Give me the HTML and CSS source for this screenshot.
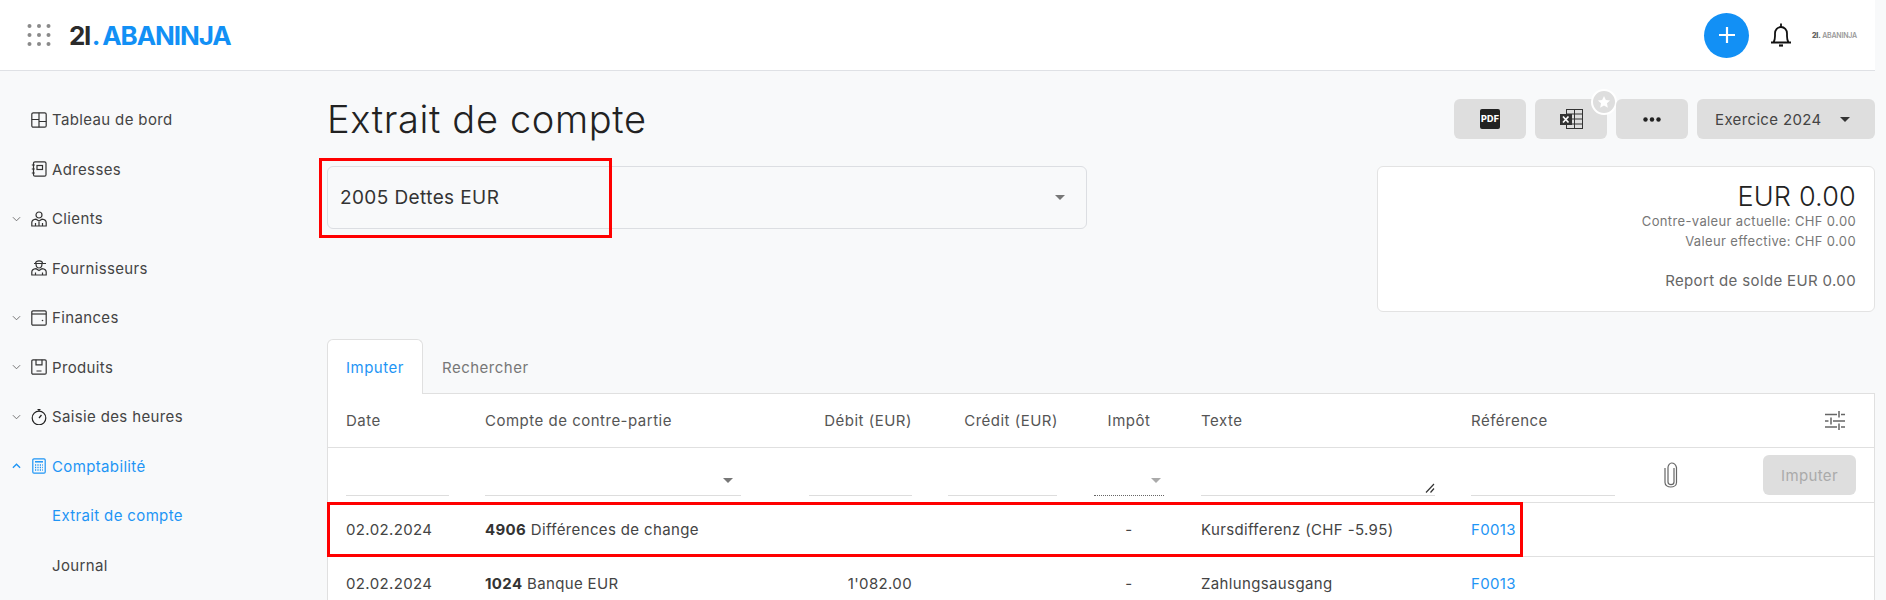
FILE: index.html
```html
<!DOCTYPE html>
<html lang="fr">
<head>
<meta charset="utf-8">
<title>Extrait de compte</title>
<link rel="stylesheet" href="styles.css">
</head>
<body>
<div class="app">
  <header class="topbar">
    <div class="brand">
      <svg class="grid-icon" width="24" height="22" viewBox="0 0 24 22"><g fill="#8a8a8a"><circle cx="2.500" cy="2" r="2"/><circle cx="12" cy="2" r="2"/><circle cx="21.500" cy="2" r="2"/><circle cx="2.500" cy="11" r="2"/><circle cx="12" cy="11" r="2"/><circle cx="21.500" cy="11" r="2"/><circle cx="2.500" cy="20" r="2"/><circle cx="12" cy="20" r="2"/><circle cx="21.500" cy="20" r="2"/></g></svg>
      <div class="logo"><span class="logo-dark">2I</span><span class="logo-dot">.</span><span class="logo-blue">ABANINJA</span></div>
    </div>
    <div class="top-actions">
      <button class="plus" type="button"><svg width="18" height="18" viewBox="0 0 18 18"><path d="M9 1v16M1 9h16" stroke="#fff" stroke-width="2.200"/></svg></button>
      <svg class="bell" width="24" height="26" viewBox="0 0 24 26" fill="none" stroke="#111" stroke-width="1.800"><path d="M2 20.500h20M4.500 20.500c1-1.500 1.500-3 1.500-6.500v-2.500c0-3.500 2.500-6.500 6-6.500s6 3 6 6.500V14c0 3.500.5 5 1.500 6.500"/><path d="M12 1.500v3.500" stroke-width="1.800"/><path d="M10 23.500h4" stroke-width="2.200"/></svg>
      <div class="mini-logo"><b>2I.</b> ABANINJA</div>
    </div>
  </header>

  <div class="layout">
    <nav class="sidebar">
      <a class="nav-item"><span class="chev"></span>
        <svg class="nav-icon" viewBox="0 0 16 16" fill="none" stroke="currentColor" stroke-width="1.200"><rect x=".8" y=".8" width="14.400" height="14.400" rx="1.500"/><path d="M8 .8v14.400M.8 7.500h7.200M8 9.500h7.200"/></svg>
        Tableau de bord</a>
      <a class="nav-item"><span class="chev"></span>
        <svg class="nav-icon" viewBox="0 0 16 16" fill="none" stroke="currentColor" stroke-width="1.200"><rect x="2.500" y=".8" width="12.500" height="14.400" rx="1.500"/><rect x="6" y="4.500" width="5.500" height="4"/><path d="M.8 4h3M.8 8h3M.8 12h3"/></svg>
        Adresses</a>
      <a class="nav-item"><span class="chev"><svg viewBox="0 0 10 6" fill="none" stroke="currentColor" stroke-width="1"><path d="M1 1l4 4 4-4"/></svg></span>
        <svg class="nav-icon" viewBox="0 0 16 16" fill="none" stroke="currentColor" stroke-width="1.200"><circle cx="8" cy="4" r="3"/><path d="M.8 15v-3.500c0-1.500 2-3 4.200-3.300L8 10l3-1.800c2.200.3 4.200 1.800 4.200 3.300V15zM4.500 12v3M8 11v4M11.500 12v3"/></svg>
        Clients</a>
      <a class="nav-item"><span class="chev"></span>
        <svg class="nav-icon" viewBox="0 0 16 16" fill="none" stroke="currentColor" stroke-width="1.200"><path d="M4.500 3.500c0-3.500 7-3.500 7 0zM3 3.500h12M5 3.500c0 6 6 6 6 0"/><path d="M.8 15v-3c0-1.500 2-3 4.200-3.300L8 10.500l3-1.800c2.200.3 4.200 1.800 4.200 3.300v3zM4.500 12.500V15M11.500 12.500V15"/></svg>
        Fournisseurs</a>
      <a class="nav-item"><span class="chev"><svg viewBox="0 0 10 6" fill="none" stroke="currentColor" stroke-width="1"><path d="M1 1l4 4 4-4"/></svg></span>
        <svg class="nav-icon" viewBox="0 0 16 16" fill="none" stroke="currentColor" stroke-width="1.200"><rect x=".8" y=".8" width="14.400" height="14.400" rx="1.200"/><path d="M.8 4h14.400"/><circle cx="11.500" cy="10.500" r=".8" fill="currentColor" stroke="none"/></svg>
        Finances</a>
      <a class="nav-item"><span class="chev"><svg viewBox="0 0 10 6" fill="none" stroke="currentColor" stroke-width="1"><path d="M1 1l4 4 4-4"/></svg></span>
        <svg class="nav-icon" viewBox="0 0 16 16" fill="none" stroke="currentColor" stroke-width="1.200"><rect x=".8" y=".8" width="14.400" height="14.400" rx="1.200"/><path d="M5 .8v5h6v-5M5.500 12h5"/></svg>
        Produits</a>
      <a class="nav-item"><span class="chev"><svg viewBox="0 0 10 6" fill="none" stroke="currentColor" stroke-width="1"><path d="M1 1l4 4 4-4"/></svg></span>
        <svg class="nav-icon" viewBox="0 0 16 16" fill="none" stroke="#222" stroke-width="1.200"><circle cx="8" cy="9" r="6.800"/><path d="M8 2.200V.2M6.500.4h3M8 9l2.500-3"/></svg>
        Saisie des heures</a>
      <a class="nav-item active"><span class="chev"><svg viewBox="0 0 10 6" fill="none" stroke="currentColor" stroke-width="1.500"><path d="M1 5l4-4 4 4"/></svg></span>
        <svg class="nav-icon" viewBox="0 0 16 16" fill="none" stroke="currentColor" stroke-width="1.200"><rect x="1.800" y=".8" width="12.400" height="14.400" rx="1.200"/><path d="M4 3.800h8" stroke-width="1.500"/><path d="M4 7h8M4 9.500h8M4 12h8" stroke-width="1.300" stroke-dasharray="1.200 1.200"/></svg>
        Comptabilité</a>
      <a class="nav-item sub active">Extrait de compte</a>
      <a class="nav-item sub">Journal</a>
    </nav>

    <main class="content">
      <div class="title-row">
        <h1 class="title">Extrait de compte</h1>
        <div class="tools">
          <button class="tool" type="button"><svg width="20" height="20" viewBox="0 0 20 20"><rect width="20" height="20" rx="2" fill="#222"/></svg><span class="pdf-label">PDF</span></button>
          <button class="tool has-star" type="button">
            <svg width="23" height="20" viewBox="0 0 23 20" fill="none" stroke="#333" stroke-width="1"><rect x="6.500" y=".5" width="16" height="19"/><path d="M6.500 5h16M6.500 10h16M6.500 15h16M14.500.5v19"/><rect x="0" y="5" width="12" height="11" fill="#333" stroke="none"/><path d="M3 7.500l5.500 6M8.500 7.500l-5.500 6" stroke="#fff" stroke-width="1.700"/></svg>
            <span class="star"><svg width="14" height="14" viewBox="0 0 24 24"><path d="M12 1.500l3.200 7 7.300.8-5.400 5 1.500 7.400L12 18l-6.600 3.700 1.500-7.400-5.400-5 7.300-.8z" fill="#fff"/></svg></span>
          </button>
          <button class="tool" type="button"><svg width="18" height="5" viewBox="0 0 18 5"><g fill="#222"><circle cx="2.500" cy="2.500" r="2.200"/><circle cx="9" cy="2.500" r="2.200"/><circle cx="15.500" cy="2.500" r="2.200"/></g></svg></button>
          <button class="tool year" type="button">Exercice 2024<i class="caret dark"></i></button>
        </div>
      </div>

      <div class="summary-row">
        <div class="select-box"><span>2005 Dettes EUR</span><i class="caret"></i></div>
        <section class="balance">
          <div class="big">EUR 0.00</div>
          <div class="small">Contre-valeur actuelle: CHF 0.00</div>
          <div class="small">Valeur effective: CHF 0.00</div>
          <div class="carry">Report de solde EUR 0.00</div>
        </section>
      </div>

      <div class="tabs">
        <div class="tab current">Imputer</div>
        <div class="tab">Rechercher</div>
      </div>
      <div class="panel">
        <div class="row head">
          <div>Date</div>
          <div>Compte de contre-partie</div>
          <div class="num">Débit (EUR)</div>
          <div class="num credit">Crédit (EUR)</div>
          <div class="center">Impôt</div>
          <div>Texte</div>
          <div>Référence</div>
          <div class="end">
            <svg width="20" height="19" viewBox="0 0 20 19" fill="none" stroke="#666" stroke-width="1.500"><path d="M0 3.500h12M16 3.500h4M14 0v6.500M0 10h3.500M8 10h12M6 6.500v7M0 16h12M16 16h4M14 12.500V19"/></svg>
          </div>
        </div>
        <div class="row entry">
          <div><span class="field w-date"></span></div>
          <div><span class="field w-account"><i class="caret"></i></span></div>
          <div><span class="field w-debit"></span></div>
          <div><span class="field w-credit"></span></div>
          <div><span class="field w-tax"><i class="caret small-caret"></i></span></div>
          <div><span class="field w-text"><svg class="grip" width="10" height="10" viewBox="0 0 10 10" fill="none" stroke="#333" stroke-width="1.200"><path d="M1 9.500L9 1M5.500 9.500L9 5.500"/></svg></span></div>
          <div><span class="field w-ref"></span></div>
          <div class="entry-end">
            <svg class="clip" width="14" height="26" viewBox="0 0 14 26" fill="none" stroke="#666" stroke-width="1.200"><path d="M10 6v14c0 3.500-6 3.500-6 0V5.500c0-2.500 2-4.500 3.500-4.500S11.500 1.500 12.500 5.500v15c0 6-11.500 6-11.500 0V6"/></svg>
            <button class="submit" type="button">Imputer</button>
          </div>
        </div>
        <div class="row item">
          <div>02.02.2024</div>
          <div><b>4906</b> Différences de change</div>
          <div class="num"></div>
          <div class="num credit"></div>
          <div class="center">-</div>
          <div>Kursdifferenz (CHF -5.95)</div>
          <div><a class="link">F0013</a></div>
          <div></div>
        </div>
        <div class="row item">
          <div>02.02.2024</div>
          <div><b>1024</b> Banque EUR</div>
          <div class="num">1'082.00</div>
          <div class="num credit"></div>
          <div class="center">-</div>
          <div>Zahlungsausgang</div>
          <div><a class="link">F0013</a></div>
          <div></div>
        </div>
      </div>
    </main>
  </div>
</div>
<div class="mark mark-select"></div>
<div class="mark mark-row"></div>
</body>
</html>
```
FILE: styles.css
```css
* { box-sizing: border-box; }
html, body { margin: 0; height: 600px; overflow: hidden; }
body {
  background: #f8f9fa;
  font-family: Inter, "Liberation Sans", sans-serif;
  font-size: 15px;
  letter-spacing: .36px;
  color: #444;
  position: relative;
}
button { font: inherit; letter-spacing: inherit; border: 0; cursor: pointer; }
.app { width: 1875px; }

.topbar {
  height: 71px;
  background: #fff;
  border-bottom: 1px solid #dfe1e5;
  display: flex;
  align-items: center;
  justify-content: space-between;
  padding-left: 27px;
}
.brand { display: flex; align-items: center; gap: 18px; }
.logo { font-size: 26px; font-weight: 700; letter-spacing: -1.100px; line-height: 1; margin-top: 1px; display: flex; }
.logo-dark { color: #2b2b2b; letter-spacing: -1.500px; }
.logo-dot { color: #1290f5; margin: 0 3px 0 2px; }
.logo-blue { color: #1290f5; }
.top-actions { display: flex; align-items: center; padding-right: 19px; }
.plus {
  width: 45px; height: 45px; border-radius: 50%;
  background: #1290f5;
  display: flex; align-items: center; justify-content: center;
  padding: 0;
}
.bell { margin-left: 20px; }
.mini-logo { margin-left: 19px; font-size: 7px; font-weight: 600; color: #999; letter-spacing: -.2px; width: 44px; white-space: nowrap; }
.mini-logo b { color: #666; }

.layout { display: flex; }
.sidebar { width: 327px; flex: none; padding-top: 24px; height: 529px; overflow: hidden; }
.nav-item {
  height: 49.500px;
  display: flex;
  align-items: center;
  padding-left: 12px;
  color: #444;
  line-height: 1;
}
.nav-item.active { color: #1e95f5; }
.nav-item.sub { padding-left: 52px; }
.chev { width: 9px; height: 6px; flex: none; margin-right: 10px; color: #666; display: block; }
.active .chev { color: #1e95f5; }
.chev svg { width: 9px; height: 6px; display: block; }
.nav-icon { width: 16px; height: 16px; margin-right: 5px; flex: none; color: #333; }
.active .nav-icon { color: #1e95f5; }

.content { flex: 1; min-width: 0; padding-top: 28px; }
.title-row { display: flex; justify-content: space-between; align-items: center; height: 40px; }
.title { margin: 0; font-size: 38px; font-weight: 300; color: #222; letter-spacing: .65px; line-height: 40px; }
.tools { display: flex; gap: 9px; }
.tool {
  width: 72px; height: 40px;
  background: #dedede;
  border-radius: 6px;
  display: flex; align-items: center; justify-content: center;
  position: relative;
  padding: 0;
  color: #444;
}
.pdf-label { position: absolute; left: 0; right: 0; top: 14px; font-size: 9px; font-weight: 800; color: #fff; line-height: 12px; text-align: center; letter-spacing: .2px; }
.star {
  position: absolute; right: -10px; top: -10px;
  width: 26px; height: 26px;
  background: #dedede;
  border: 2px solid #fff;
  border-radius: 50%;
  display: flex; align-items: center; justify-content: center;
}
.year { width: 178px; justify-content: flex-start; padding-left: 18px; gap: 18px; }
.caret { width: 0; height: 0; border-left: 5px solid transparent; border-right: 5px solid transparent; border-top: 5px solid #777; display: block; }
.caret.dark { border-top-color: #333; }

.summary-row { display: flex; justify-content: space-between; align-items: flex-start; margin-top: 27px; }
.select-box {
  width: 760px; height: 63px;
  border: 1px solid #dcdee2;
  border-radius: 6px;
  display: flex; align-items: center; justify-content: space-between;
  padding: 0 21px 0 12px;
  font-size: 19px;
  letter-spacing: .4px;
  color: #333;
}
.balance {
  width: 498px; height: 146px;
  background: #fff;
  border: 1px solid #e3e3e3;
  border-radius: 6px;
  padding: 15px 18px 0 0;
  text-align: right;
}
.big { font-size: 27px; font-weight: 300; line-height: 30px; letter-spacing: .2px; color: #222; }
.small { font-size: 13px; line-height: 19.500px; color: #777; }
.carry { margin-top: 20px; line-height: 20px; color: #666; }

.tabs { display: flex; margin-top: 27px; height: 55px; position: relative; z-index: 1; letter-spacing: .5px; }
.tab { height: 55px; padding: 1px 19px 0; display: flex; align-items: center; color: #777; }
.tab.current {
  width: 96px;
  padding-left: 18px;
  background: #fff;
  color: #1e95f5;
  border: 1px solid #e0e0e0;
  border-bottom: 0;
  border-radius: 6px 6px 0 0;
}
.panel { background: #fff; border: 1px solid #e0e0e0; margin-top: -1px; }
.row {
  display: grid;
  grid-template-columns: 139px 324px 139px 146px 107px 270px 192px 1fr;
  padding-left: 18px;
  align-items: center;
  border-bottom: 1px solid #e0e0e0;
}
.head { height: 54px; color: #555; letter-spacing: .5px; }
.entry { height: 55px; align-items: end; padding-bottom: 6px; }
.item { height: 54px; color: #444; }
.item b { font-weight: 700; color: #333; }
.num { text-align: right; }
.row > .num { padding-right: 36px; }
.center { text-align: center; width: 70px; }
.end { display: flex; justify-content: flex-end; padding-right: 29px; }
.link { color: #1e95f5; }
.field { display: flex; align-items: center; justify-content: flex-end; height: 30px; border-bottom: 1px solid #ddd; position: relative; }
.w-date { width: 103px; }
.w-account { width: 256px; padding-right: 8px; }
.w-debit { width: 103px; }
.w-credit { width: 109px; }
.w-tax { width: 70px; border-bottom: 1px dotted #666; padding-right: 3px; }
.small-caret { border-top-color: #aaa; }
.w-text { width: 234px; }
.grip { position: absolute; right: 0; bottom: 2px; }
.w-ref { width: 144px; }
.entry-end { display: flex; align-items: center; justify-content: space-between; padding-right: 18px; padding-left: 1px; margin-bottom: 6px; height: 30px; }
.submit { width: 93px; height: 40px; background: #dedede; color: #aaa; border-radius: 6px; padding: 0; }

.mark { position: absolute; border: 3px solid #ff0000; pointer-events: none; z-index: 5; }
.mark-select { left: 319px; top: 158px; width: 293px; height: 80px; }
.mark-row { left: 327px; top: 502px; width: 1196px; height: 55px; }
```
